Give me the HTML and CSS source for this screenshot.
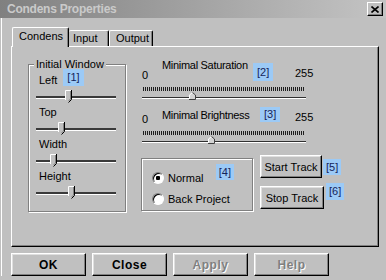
FILE: index.html
```html
<!DOCTYPE html>
<html lang="en">
<head>
  <meta charset="UTF-8" />
  <title>Condens Properties</title>
  <link rel="stylesheet" href="styles.css">
</head>
<body>

  <svg class="svg-defs" xmlns="http://www.w3.org/2000/svg">
    <symbol id="thumb-down" viewBox="0 0 7 13">
      <polygon points="0,0 7,0 7,9.5 3.5,13 0,9.5" fill="#c0c0c0" />
      <polyline points="0.5,10 0.5,0.5 6,0.5" fill="none" stroke="#fff" />
      <polyline points="6.5,0 6.5,9.5 3.5,12.5" fill="none" stroke="#000" />
      <polyline points="5.5,1 5.5,9 3.5,11" fill="none" stroke="#808080" />
    </symbol>
    <symbol id="thumb-up" viewBox="0 0 7 8">
      <polygon points="3.5,0 7,3 7,8 0,8 0,3" fill="#d4d4d4" />
      <polyline points="0.5,7.5 0.5,3 3.5,0.5" fill="none" stroke="#fff" />
      <polyline points="3.5,0.5 6.5,3 6.5,7.5 0,7.5" fill="none" stroke="#404040" />
    </symbol>
  </svg>

  <div class="window">
    <div class="titlebar">
      <span class="title">Condens Properties</span>
      <button class="close-btn" aria-label="Close">
        <svg width="8" height="7" viewBox="0 0 8 7">
          <path d="M0.5 0.5 L7.5 6.5 M7.5 0.5 L0.5 6.5" stroke="#000" stroke-width="1.6" />
        </svg>
      </button>
    </div>

    <div class="dialog">
      <div class="tabs">
        <div class="tab active">Condens</div>
        <div class="tab tab-input">Input</div>
        <div class="tab tab-output">Output</div>
      </div>

      <div class="panel">

        <div class="group window-group">
          <div class="group-title">Initial Window</div>

          <div class="field-label">Left <span class="tag tag-1">[1]</span></div>
          <div class="slider">
            <div class="track"></div>
            <svg class="thumb" style="left: 29px"><use href="#thumb-down" /></svg>
          </div>

          <div class="field-label">Top</div>
          <div class="slider">
            <div class="track"></div>
            <svg class="thumb" style="left: 22px"><use href="#thumb-down" /></svg>
          </div>

          <div class="field-label">Width</div>
          <div class="slider">
            <div class="track"></div>
            <svg class="thumb" style="left: 14px"><use href="#thumb-down" /></svg>
          </div>

          <div class="field-label">Height</div>
          <div class="slider">
            <div class="track"></div>
            <svg class="thumb" style="left: 32px"><use href="#thumb-down" /></svg>
          </div>
        </div>

        <div class="controls">
          <div class="range-block sat">
            <div class="range-head">
              <span class="min">0</span>
              <span class="name">Minimal Saturation</span>
              <span class="tag tag-2">[2]</span>
              <span class="max">255</span>
            </div>
            <div class="slider-wide">
              <div class="ticks"></div>
              <div class="track"></div>
              <svg class="thumb-sm" style="left: 47px"><use href="#thumb-up" /></svg>
            </div>
          </div>

          <div class="range-block bright">
            <div class="range-head">
              <span class="min">0</span>
              <span class="name">Minimal Brightness</span>
              <span class="tag tag-3">[3]</span>
              <span class="max">255</span>
            </div>
            <div class="slider-wide">
              <div class="ticks"></div>
              <div class="track"></div>
              <svg class="thumb-sm" style="left: 66px"><use href="#thumb-up" /></svg>
            </div>
          </div>

          <div class="mode-row">
            <div class="group radio-box">
              <div class="radio-row">
                <span class="radio checked"></span>
                <span>Normal</span>
                <span class="tag tag-4">[4]</span>
              </div>
              <div class="radio-row">
                <span class="radio"></span>
                <span>Back Project</span>
              </div>
            </div>

            <div class="track-buttons">
              <div class="track-row">
                <button class="btn btn-start">Start Track</button>
                <span class="tag tag-5">[5]</span>
              </div>
              <div class="track-row">
                <button class="btn btn-stop">Stop Track</button>
                <span class="tag tag-6">[6]</span>
              </div>
            </div>
          </div>
        </div>

      </div>

      <div class="footer-buttons">
        <button class="btn btn-main">OK</button>
        <button class="btn btn-main">Close</button>
        <button class="btn btn-main disabled">Apply</button>
        <button class="btn btn-main disabled">Help</button>
      </div>
    </div>
  </div>

</body>
</html>
```

FILE: styles.css
```css
body {
  margin: 0;
  background: #c0c0c0;
  font-family: "Liberation Sans", Arial, sans-serif;
  font-size: 11px;
  color: #000;
}
.svg-defs {
  display: none;
}
.window {
  width: 386px;
  height: 280px;
  background: #c0c0c0;
  overflow: hidden;
}

/* title bar */
.titlebar {
  height: 18px;
  display: flex;
  align-items: center;
  justify-content: space-between;
  background: linear-gradient(to right, #808080, #c4c4c4);
}
.title {
  padding-left: 7px;
  font-weight: bold;
  font-size: 12px;
  letter-spacing: -0.25px;
  color: #cacaca;
}
.close-btn {
  width: 16px;
  height: 14px;
  margin-right: 3px;
  padding: 0;
  display: flex;
  align-items: center;
  justify-content: center;
  background: #c0c0c0;
  border: 1px solid;
  border-color: #fff #000 #000 #fff;
  box-shadow: inset -1px -1px #808080;
}

.dialog {
  margin-left: 1px;
  border-left: 1px solid #fff;
  padding: 9px 0 0 9px;
}

/* tabs */
.tabs {
  display: flex;
  align-items: flex-end;
  height: 19px;
  margin-left: 1px;
}
.tab {
  box-sizing: border-box;
  height: 16px;
  line-height: 14px;
  border-top: 1px solid #fff;
  border-right: 1px solid #000;
  border-radius: 2px 2px 0 0;
  box-shadow: inset -1px 0 #808080;
  background: #c0c0c0;
}
.tab.active {
  position: relative;
  z-index: 1;
  width: 57px;
  height: 20px;
  line-height: 17px;
  margin-bottom: -1px;
  padding-left: 6px;
  border-left: 1px solid #fff;
}
.tab-input {
  width: 40px;
  padding-left: 4px;
}
.tab-output {
  width: 44px;
  padding-left: 6px;
  border-left: 1px solid #fff;
}

.panel {
  box-sizing: border-box;
  width: 368px;
  height: 201px;
  display: flex;
  align-items: flex-start;
  padding: 11px 0 0 16px;
  border: 1px solid;
  border-color: #fff #000 #000 #fff;
  box-shadow: inset -1px -1px #808080;
}

/* etched group box */
.group {
  box-sizing: border-box;
  border: 1px solid #808080;
  box-shadow: inset 1px 1px #fff, 1px 1px #fff;
}
.window-group {
  width: 98px;
  margin-top: 6px;
  padding: 0 9px 10px 7px;
}
.group-title {
  width: fit-content;
  margin: -7px 0 2px -2px;
  padding: 0 2px;
  line-height: 13px;
  background: #c0c0c0;
}
.field-label {
  display: flex;
  height: 14px;
  line-height: 14px;
  padding-left: 3px;
}

.tag {
  box-sizing: border-box;
  padding: 0 4px;
  background: #9ccaf6;
  color: #14245a;
  text-align: center;
}
.tag-1 {
  height: 17px;
  line-height: 17px;
  margin: -4px 0 0 6px;
  align-self: flex-start;
}

.slider {
  position: relative;
  box-sizing: border-box;
  width: 80px;
  height: 18px;
  padding-top: 9px;
}
.slider .track {
  height: 2px;
  background: #3a3a3a;
  border-bottom: 1px solid #fff;
}
.thumb {
  position: absolute;
  top: 3px;
  width: 7px;
  height: 13px;
}

/* right side */
.controls {
  width: 210px;
  margin: 1px 0 0 16px;
}
.range-block + .range-block {
  margin-top: 6px;
}
.range-head {
  display: grid;
  grid-template-columns: 20px 91px 42px auto;
  align-items: end;
  line-height: 12px;
  margin-bottom: 6px;
}
.range-head .name {
  letter-spacing: -0.3px;
}
.range-head .max {
  margin-bottom: 2px;
}
.sat .name {
  margin-bottom: 10px;
}
.bright .name {
  margin-bottom: 4px;
}
.tag-2 {
  justify-self: start;
  height: 18px;
  line-height: 18px;
}
.tag-3 {
  justify-self: start;
  height: 15px;
  line-height: 15px;
  margin: 0 0 3px 7px;
}

.slider-wide {
  position: relative;
  width: 164px;
  height: 14px;
}
.ticks {
  width: 161px;
  height: 4px;
  margin-left: 1px;
  background: repeating-linear-gradient(to right, #1e1e1e 0 1px, transparent 1px 2px);
}
.slider-wide .track {
  margin-top: 6px;
  height: 1px;
  background: #303030;
  border-bottom: 1px solid #fff;
}
.thumb-sm {
  position: absolute;
  top: 5px;
  width: 7px;
  height: 8px;
}

.mode-row {
  display: flex;
  align-items: flex-start;
  margin-top: 10px;
}
.radio-box {
  width: 112px;
  margin: 3px 0 0 -1px;
  padding: 11px 18px 3px 10px;
  display: flex;
  flex-direction: column;
  gap: 5px;
}
.radio-row {
  display: flex;
  align-items: center;
  height: 16px;
}
.radio {
  box-sizing: border-box;
  width: 12px;
  height: 12px;
  margin-right: 4px;
  border-radius: 50%;
  border: 1px solid;
  border-color: #808080 #fff #fff #808080;
  box-shadow: inset 1px 1px #000;
  background: #fff;
}
.radio.checked {
  background: radial-gradient(circle, #000 0 2px, #fff 2.5px);
}
.tag-4 {
  margin: -6px 0 0 auto;
  align-self: flex-start;
  height: 16px;
  line-height: 16px;
  padding: 0 3px;
}

.track-buttons {
  display: flex;
  flex-direction: column;
  gap: 8px;
  margin-left: 7px;
}
.track-row {
  display: flex;
  align-items: center;
}

.btn {
  box-sizing: border-box;
  height: 23px;
  padding: 0;
  font-family: inherit;
  font-size: 11px;
  color: #000;
  background: #c0c0c0;
  border: 1px solid;
  border-color: #fff #000 #000 #fff;
  box-shadow: inset -1px -1px #808080, inset 1px 1px #dfdfdf;
}
.btn-start {
  width: 62px;
}
.btn-stop {
  width: 64px;
}
.tag-5 {
  height: 16px;
  line-height: 16px;
  margin-left: 1px;
  padding: 0 3px;
}
.tag-6 {
  align-self: flex-start;
  height: 17px;
  line-height: 17px;
  margin: -3px 0 0 2px;
  padding: 0 3px;
}

.footer-buttons {
  display: flex;
  gap: 6px;
  margin-top: 6px;
}
.btn-main {
  width: 75px;
  font-size: 12px;
  font-weight: bold;
  letter-spacing: 0.5px;
}
.btn-main.disabled {
  color: #808080;
  text-shadow: 1px 1px #fff;
}
```
